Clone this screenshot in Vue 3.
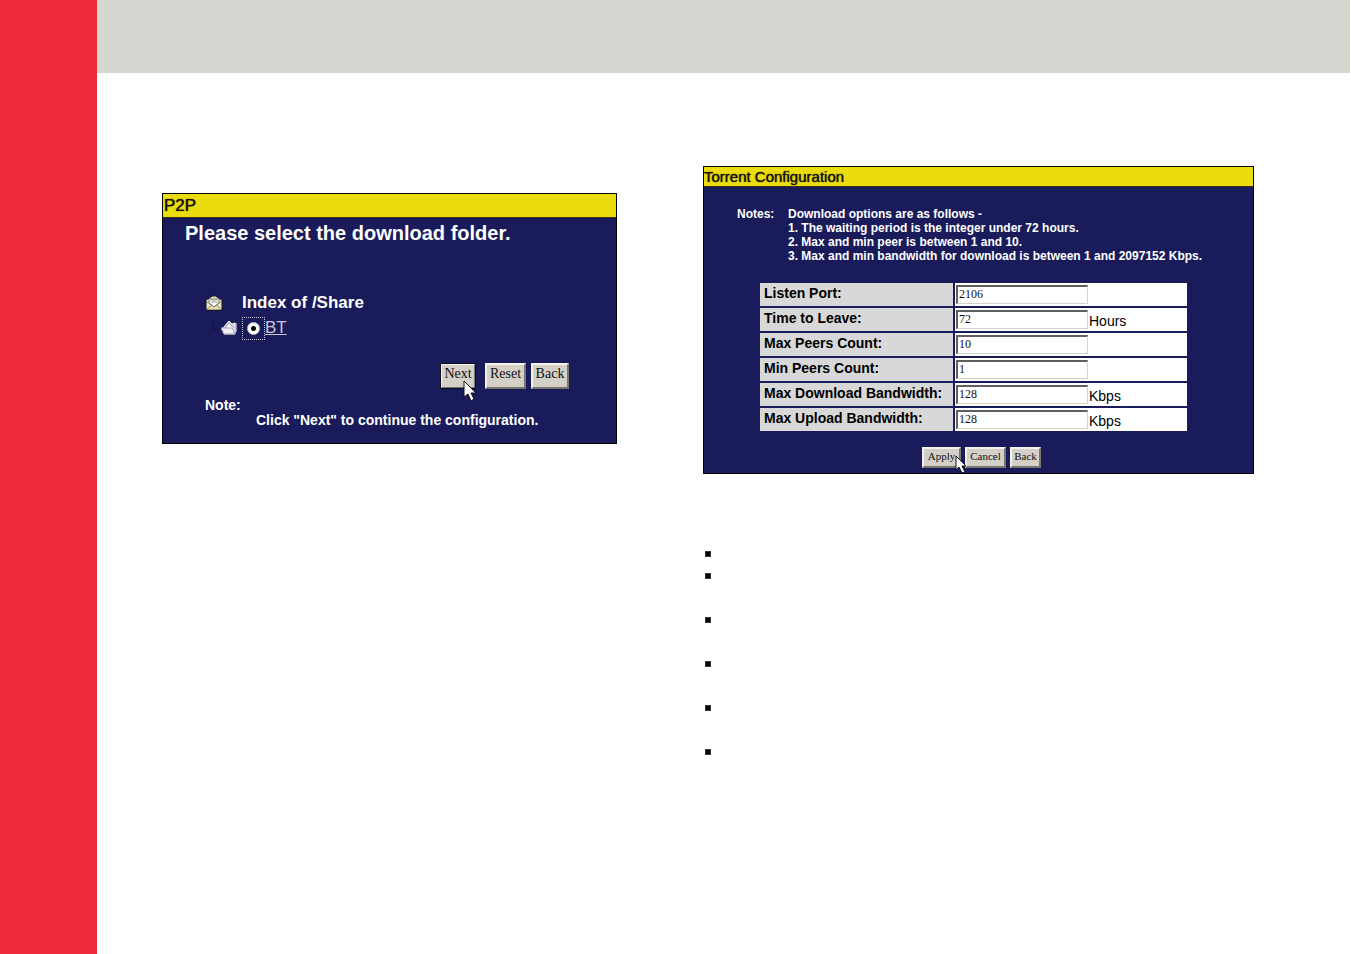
<script setup>
import { ref } from 'vue'

const folder = ref('BT')

const fields = ref([
  { id: 'listen-port', label: 'Listen Port:', value: '2106', unit: '' },
  { id: 'time-to-leave', label: 'Time to Leave:', value: '72', unit: 'Hours' },
  { id: 'max-peers', label: 'Max Peers Count:', value: '10', unit: '' },
  { id: 'min-peers', label: 'Min Peers Count:', value: '1', unit: '' },
  { id: 'max-download', label: 'Max Download Bandwidth:', value: '128', unit: 'Kbps' },
  { id: 'max-upload', label: 'Max Upload Bandwidth:', value: '128', unit: 'Kbps' },
])

const bullets = ['single', 'double', 'double', 'double', 'double', 'double']
</script>

<template>
  <div class="page">
    <aside class="rail"></aside>
    <div class="body">
      <header class="banner"></header>
      <main class="columns">
        <section class="panel p2p">
          <h2 class="title">P2P</h2>
          <form class="p2p-form" @submit.prevent>
            <h3 class="heading">Please select the download folder.</h3>
            <div class="tree">
              <div class="root">
                <svg class="mail" width="18" height="17" viewBox="0 0 18 17" aria-hidden="true">
                  <path d="M1 5L6 2L7 1H11L12 2L17 5V15H1Z" fill="#e9e6c4" stroke="#111122" />
                  <path d="M4 4H14V8L9 12L4 8Z" fill="#f4f4f4" stroke="#77745e" />
                  <path d="M6 5H12M6 7H12" stroke="#96a092" />
                  <path d="M1 6L9 12L17 6M2 14L7 10M16 14L11 10" fill="none" stroke="#8c8760" />
                  <path d="M2 14H16" stroke="#d9d168" />
                </svg>
                <span class="root-name">Index of /Share</span>
              </div>
              <div class="branch">
                <svg class="line" width="10" height="20" viewBox="0 0 10 20" aria-hidden="true">
                  <path d="M2 0V11H9" fill="none" stroke="#10123f" />
                </svg>
                <svg class="open" width="16" height="16" viewBox="0 0 16 16" aria-hidden="true">
                  <path d="M2 8L8 1L11 4L14 3V14H3Z" fill="#d3d4dc" stroke="#f5f5f7" />
                  <path d="M4 8L8 3L13 8" fill="#f8f8fa" stroke="#9497a9" />
                  <path d="M0 8H11L14 14H3Z" fill="#f0f0f3" stroke="#a3a5b2" />
                  <path d="M15 3V12" stroke="#f7f7f7" />
                </svg>
                <span class="focus">
                  <input id="folder-bt" v-model="folder" class="radio" type="radio" name="folder" value="BT" aria-label="BT" />
                </span>
                <a class="folder" href="#">BT</a>
              </div>
            </div>
            <div class="actions wide">
              <button class="btn next" type="submit">
                Next
                <svg class="cursor" width="14" height="22" viewBox="0 0 14 22" aria-hidden="true">
                  <path d="M1 1V17L5 14L8 21L11 19L8 13H13Z" fill="#fff" stroke="#111" />
                </svg>
              </button>
              <button class="btn reset" type="reset">Reset</button>
              <button class="btn back" type="button">Back</button>
            </div>
            <p class="note">Note:</p>
            <p class="note hint">Click "Next" to continue the configuration.</p>
          </form>
        </section>

        <div class="right">
          <section class="panel torrent">
            <h2 class="title">Torrent Configuration</h2>
            <form class="torrent-form" @submit.prevent>
              <div class="notes">
                <span>Notes:</span>
                <div>
                  <p>Download options are as follows -</p>
                  <p>1. The waiting period is the integer under 72 hours.</p>
                  <p>2. Max and min peer is between 1 and 10.</p>
                  <p>3. Max and min bandwidth for download is between 1 and 2097152 Kbps.</p>
                </div>
              </div>
              <table class="settings">
                <tbody>
                  <tr v-for="field in fields" :key="field.id">
                    <th scope="row"><label :for="field.id">{{ field.label }}</label></th>
                    <td>
                      <div class="value">
                        <input :id="field.id" v-model="field.value" class="box" type="text" />
                        <span class="unit">{{ field.unit }}</span>
                      </div>
                    </td>
                  </tr>
                </tbody>
              </table>
              <div class="actions compact">
                <button class="btn apply" type="submit">
                  Apply
                  <svg class="cursor" width="12" height="18" viewBox="0 0 12 18" aria-hidden="true">
                    <path d="M1 1V15L4 12L7 18L10 17L7 11H11Z" fill="#fff" stroke="#111" />
                  </svg>
                </button>
                <button class="btn cancel" type="reset">Cancel</button>
                <button class="btn return" type="button">Back</button>
              </div>
            </form>
          </section>
          <ul class="bullets">
            <li v-for="(size, index) in bullets" :key="index" :class="size"></li>
          </ul>
        </div>
      </main>
    </div>
  </div>
</template>

<style>
body {
  background: #fff;
}
</style>

<style scoped>
* {
  box-sizing: border-box;
}

.page {
  display: flex;
  min-height: 100vh;
  font-family: "Liberation Sans", Arial, sans-serif;
}

.rail {
  flex: 0 0 97px;
  background: #ee2b3b;
}

.body {
  flex: 1;
  min-width: 0;
}

.banner {
  height: 73px;
  margin-right: 1px;
  background: #d5d6d0;
}

.columns {
  display: grid;
  grid-template-columns: 455fr 551fr;
  column-gap: 86px;
  align-items: start;
  padding: 93px 97px 40px 65px;
}

.panel {
  border: 1px solid #000;
  background: #191b5b;
  color: #fff;
}

.p2p {
  margin-top: 27px;
}

.title,
.heading,
.note,
.notes p {
  margin: 0;
}

.title {
  border-bottom: 1px solid #3a2d1c;
  background: #ebdc0d;
  color: #14100c;
  font-weight: 400;
  text-shadow: 0 0 1px #14100c;
}

.p2p .title {
  padding-left: 1px;
  font-size: 17px;
  line-height: 23px;
}

.torrent .title {
  font-size: 15px;
  line-height: 19px;
}

.p2p-form {
  padding: 3px 0 15px 22px;
}

.heading {
  font-size: 20px;
  font-weight: 700;
  line-height: 24px;
  white-space: nowrap;
}

.tree {
  padding: 46px 0 0 20px;
}

.root,
.branch {
  display: flex;
  align-items: center;
}

.root {
  height: 24px;
  gap: 19px;
  font-size: 17px;
  font-weight: 700;
}

.branch {
  height: 26px;
  padding-left: 6px;
}

.focus {
  display: flex;
  align-items: center;
  justify-content: center;
  width: 23px;
  height: 23px;
  margin-left: 5px;
  border: 1px dotted #c8c8d4;
}

.radio {
  appearance: none;
  width: 13px;
  height: 13px;
  margin: 0;
  border: 1px solid #c9c9c9;
  border-radius: 50%;
  background: #fff;
}

.radio:checked {
  background: radial-gradient(circle, #000 0 2px, #fff 3px);
}

.folder {
  color: #c6c7d6;
  font-size: 17px;
  line-height: 20px;
}

.actions {
  display: flex;
}

.wide {
  gap: 5px;
  justify-content: flex-end;
  padding: 22px 47px 9px 0;
}

.btn {
  position: relative;
  padding: 0;
  border: 2px solid;
  border-color: #f4f2ec #77756f #77756f #f4f2ec;
  background: #d4d0c8;
  color: #111;
  font-family: "Liberation Serif", "Times New Roman", serif;
}

.wide .btn {
  height: 26px;
  padding-bottom: 4px;
  font-size: 14px;
  line-height: 18px;
}

.next {
  width: 36px;
  margin-right: 4px;
  outline: 1px solid #0c0c20;
  outline-offset: -1px;
}

.reset {
  width: 41px;
}

.back {
  width: 38px;
}

.cursor {
  position: absolute;
  z-index: 1;
}

.next .cursor {
  top: 15px;
  left: 21px;
}

.note {
  padding-left: 20px;
  font-size: 14px;
  font-weight: 700;
  line-height: 15px;
}

.hint {
  padding-left: 71px;
}

.torrent-form {
  padding: 20px 0 5px;
}

.notes {
  display: grid;
  grid-template-columns: 51px 1fr;
  padding-left: 33px;
  font-size: 12px;
  font-weight: 700;
  line-height: 14px;
}

.settings {
  width: calc(100% - 118px);
  margin: 18px 64px 0 54px;
  border-spacing: 2px;
  table-layout: fixed;
  color: #000;
  font-size: 14px;
}

.settings th,
.settings td {
  height: 23px;
  padding: 0;
}

.settings th {
  width: 193px;
  padding: 0 0 3px 4px;
  background: #d8d8d8;
  line-height: 20px;
  text-align: left;
  white-space: nowrap;
}

.settings td {
  background: #fff;
}

.value {
  display: flex;
  height: 23px;
  align-items: center;
  padding-left: 1px;
}

.box {
  width: 132px;
  height: 19px;
  padding: 0 1px 2px;
  border: 2px solid;
  border-color: #5f5f5f #d6d3ca #d6d3ca #5f5f5f;
  border-right-width: 1px;
  border-bottom-width: 1px;
  background: #fff;
  color: #111;
  font-family: "Liberation Serif", "Times New Roman", serif;
  font-size: 12px;
}

.unit {
  padding: 2px 0 0 1px;
  line-height: 18px;
}

.compact {
  gap: 4px;
  justify-content: center;
  padding: 14px 0 0 6px;
}

.compact .btn {
  height: 21px;
  padding-bottom: 2px;
  font-size: 11px;
  line-height: 15px;
}

.apply {
  width: 39px;
}

.cancel {
  width: 41px;
}

.return {
  width: 31px;
}

.apply .cursor {
  top: 6px;
  left: 31px;
}

.bullets {
  margin: 69px 0 0;
  padding: 0;
  list-style: none;
}

.bullets li {
  padding: 8px 0 0 2px;
}

.bullets li::before {
  content: "";
  display: block;
  box-sizing: border-box;
  width: 6px;
  height: 6px;
  border: 1px solid #333;
  background: #000;
}

.single {
  height: 22px;
}

.double {
  height: 44px;
}
</style>
